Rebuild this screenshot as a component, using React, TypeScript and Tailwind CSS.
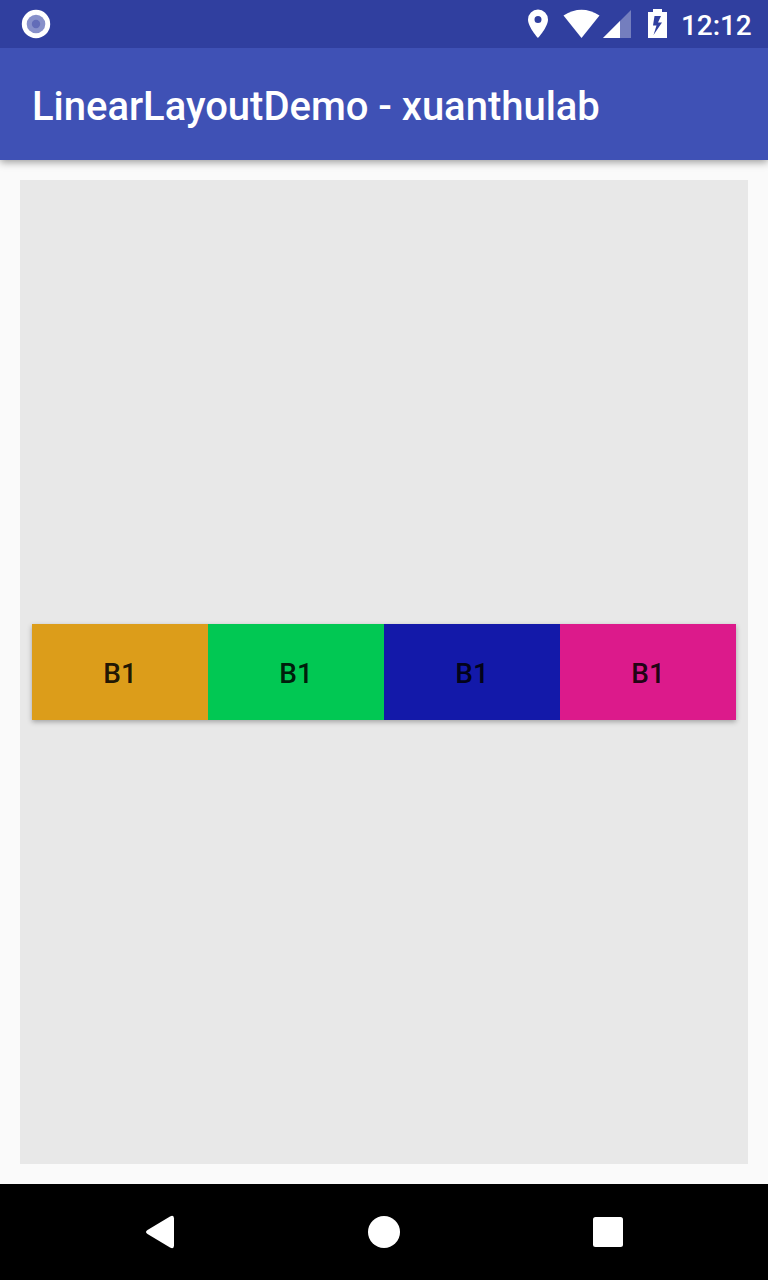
import React from "react";

const colors = ["bg-[#dc9d1a]", "bg-[#01c853]", "bg-[#1319a9]", "bg-[#dc1a8b]"];

function StatusBar() {
  return (
    <div className="relative z-10 flex h-12 shrink-0 items-center bg-[#303f9f] text-white">
      <svg className="ml-5" width="32" height="48" viewBox="20 0 32 48">
        <circle cx="36" cy="24" r="14.2" fill="#fff" />
        <circle cx="36" cy="24" r="9.3" fill="#8790ca" />
        <circle cx="36" cy="24" r="4.2" fill="#626cb8" />
      </svg>
      <svg className="ml-auto" width="152" height="48" viewBox="520 0 152 48" fill="#fff">
        <path fillRule="evenodd" d="M538 9.500a10 10 0 0 0-10 10c0 7.500 10 18.500 10 18.500s10-11 10-18.500a10 10 0 0 0-10-10zm0 13.500a3.500 3.500 0 1 1 0-7 3.500 3.500 0 0 1 0 7z" />
        <path d="M563.500 15.500Q581.500 4 599.500 15.500L581.500 38z" />
        <path d="M631 10v28h-28z" fillOpacity=".33" />
        <path d="M620 21v17h-17z" />
        <path fillRule="evenodd" d="M653 9h9v3h5v26h-19V12h5zM654.500 16l-1.500 9.500h3.500L653.500 35l8.500-12.500h-4l3-6.500z" />
      </svg>
      <div className="ml-[9px] mr-4 mt-[3px] w-[71px] whitespace-nowrap font-['Roboto',sans-serif] text-[28px] font-medium leading-8 tracking-[-0.1px]">12:12</div>
    </div>
  );
}

export default function App() {
  return (
    <div className="flex h-[1280px] w-[768px] flex-col overflow-hidden bg-[#fafafa] font-['Roboto',sans-serif]">
      <StatusBar />
      <header className="flex h-28 shrink-0 items-center bg-[#3f51b5] px-8 pt-1.5 text-[40px] font-medium text-white shadow-[0_2px_8px_rgba(0,0,0,0.4)]">
        <h1 className="whitespace-nowrap tracking-[-0.02px]">LinearLayoutDemo - xuanthulab</h1>
      </header>
      <main className="flex flex-1 p-5">
        <div className="z-10 flex flex-1 items-center bg-[#e8e8e8] px-3">
          <div className="flex h-24 flex-1 shadow-[0_2px_5px_rgba(0,0,0,0.3)]">
            {colors.map((color) => (
              <button key={color} className={`${color} flex-1 pt-1 text-[28px] font-medium text-black/87`}>B1</button>
            ))}
          </div>
        </div>
      </main>
      <nav className="flex h-24 shrink-0 bg-black px-12">
        <svg className="flex-1" height="96" viewBox="48 1184 224 96" fill="#fff">
          <path d="M147.500 1230L170 1216.500Q174 1214.500 174 1218.500V1245.500Q174 1249.500 170 1247.500L147.500 1234Q144.500 1232 147.500 1230z" />
        </svg>
        <svg className="flex-1" height="96" viewBox="272 1184 224 96" fill="#fff"><circle cx="384" cy="1232" r="16" /></svg>
        <svg className="flex-1" height="96" viewBox="496 1184 224 96" fill="#fff"><rect x="593" y="1217" width="30" height="30" rx="2.500" /></svg>
      </nav>
    </div>
  );
}
